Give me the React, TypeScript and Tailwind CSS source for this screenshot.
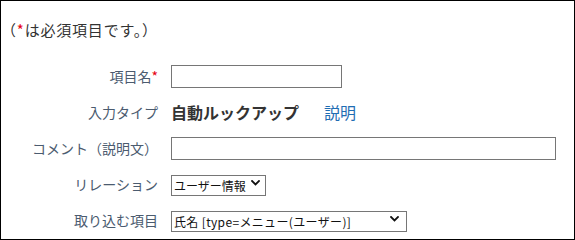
import React from "react";

function Chevron({ className }: { className: string }) {
  return (
    <svg
      className={className}
      width="9"
      height="6"
      viewBox="0 0 9 6"
      fill="none"
      stroke="#111"
      strokeWidth="1.8"
      strokeLinecap="square"
    >
      <path d="M1 1l3.5 3.5L8 1" />
    </svg>
  );
}

function Label({ children }: { children: React.ReactNode }) {
  return <div className="text-right text-[14px] leading-9 text-[#4b5b6f]">{children}</div>;
}

export default function App() {
  return (
    <div className="w-[575px] h-[240px] border border-black bg-white font-['Noto_Sans_CJK_JP',sans-serif] overflow-hidden">
      <p className="pt-[17px] text-[15px] leading-[24px] tracking-[0.8px] text-[#333]">
        （<span className="text-[#e60012]">*</span>は必須項目です。）
      </p>

      <div className="mt-[16px] grid grid-cols-[157px_1fr] gap-x-[13px]">
        {/* 項目名 */}
        <Label>
          項目名<span className="text-[#e60012]">*</span>
        </Label>
        <div className="flex h-9 items-center">
          <input type="text" className="w-[171px] h-[23px] border border-[#767676] bg-white" />
        </div>

        {/* 入力タイプ */}
        <Label>入力タイプ</Label>
        <div className="flex h-9 items-center">
          <span className="text-[16px] font-bold text-[#333]">自動ルックアップ</span>
          <a href="#" className="ml-[25px] text-[16px] text-[#1f6db3]">
            説明
          </a>
        </div>

        {/* コメント */}
        <Label>コメント（説明文）</Label>
        <div className="flex h-9 items-center">
          <input type="text" className="w-[385px] h-[23px] border border-[#767676] bg-white" />
        </div>

        {/* リレーション */}
        <Label>リレーション</Label>
        <div className="flex h-9 items-center">
          <div className="relative">
            <select className="appearance-none w-[95px] h-[21px] border border-[#767676] bg-white pl-[2px] text-[12px] leading-[19px] text-[#111] outline-none">
              <option>ユーザー情報</option>
            </select>
            <Chevron className="pointer-events-none absolute right-[6px] top-[8px]" />
          </div>
        </div>

        {/* 取り込む項目 */}
        <Label>取り込む項目</Label>
        <div className="flex h-[35px] items-center">
          <div className="relative">
            <select className="appearance-none w-[236px] h-[21px] border border-[#767676] bg-white pl-[2px] text-[12px] leading-[19px] tracking-[0.35px] text-[#111] outline-none">
              <option>氏名 [type=メニュー(ユーザー)]</option>
            </select>
            <Chevron className="pointer-events-none absolute right-[8px] top-[8px]" />
          </div>
        </div>
      </div>
    </div>
  );
}
